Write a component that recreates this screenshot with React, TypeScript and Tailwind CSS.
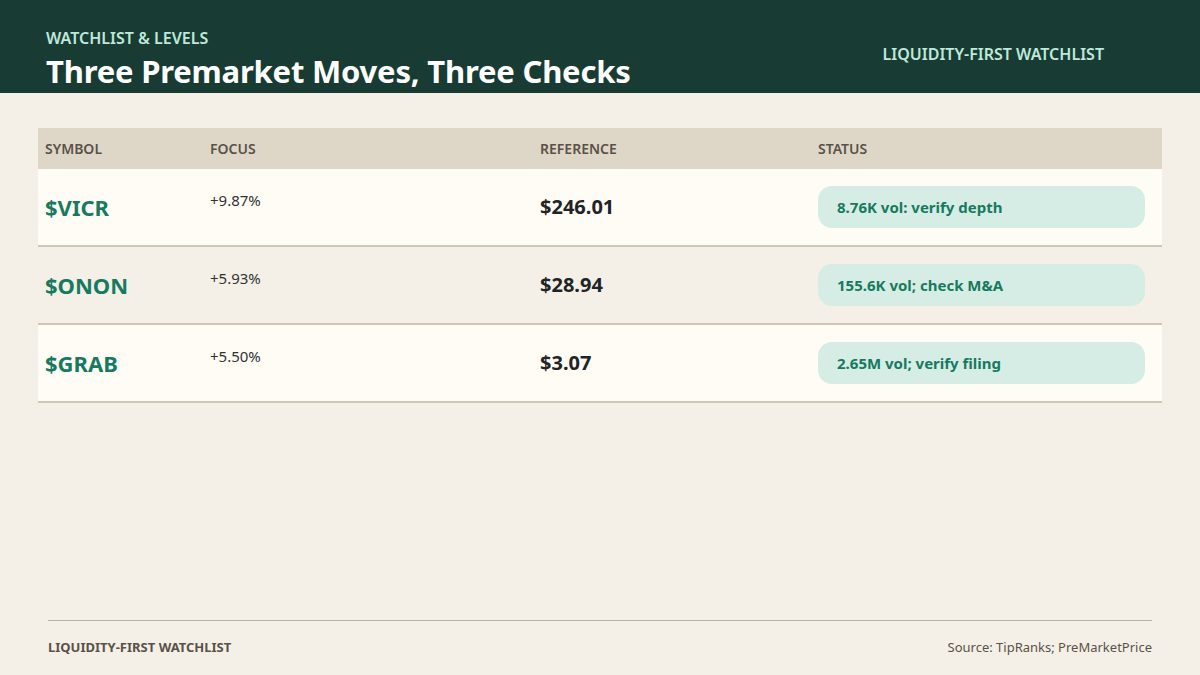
export default function App() {
  const rows = [
    { s: "$VICR", f: "+9.87%", r: "$246.01", st: "8.76K vol: verify depth", bg: "bg-[#fffcf5]" },
    { s: "$ONON", f: "+5.93%", r: "$28.94", st: "155.6K vol; check M&A", bg: "bg-[#f4f0e7]" },
    { s: "$GRAB", f: "+5.50%", r: "$3.07", st: "2.65M vol; verify filing", bg: "bg-[#fffcf5]" },
  ];
  return (
    <div className="w-[1200px] h-[675px] bg-[#f4f0e7] flex flex-col" style={{ fontFamily: '"Noto Sans", "Open Sans", sans-serif' }}>
      <div className="h-[93px] bg-[#183c34] flex items-start justify-between px-[46px] shrink-0">
        <div className="pt-[27px]">
          <div className="text-[16px] font-semibold text-[#bfe9da] leading-[22px]">WATCHLIST &amp; LEVELS</div>
          <div className="text-[31px] font-bold text-white leading-[42px] mt-[1px] tracking-[-0.2px]">Three Premarket Moves, Three Checks</div>
        </div>
        <div className="pt-[42px] pr-[50px] text-[16px] font-semibold text-[#bfe9da]">LIQUIDITY-FIRST WATCHLIST</div>
      </div>
      <div className="mx-[38px] mt-[35px]">
        <div className="h-[41px] bg-[#ded7c8] flex items-center text-[14px] font-semibold text-[#5a5148]">
          <div className="w-[172px] pl-[7px]">SYMBOL</div>
          <div className="w-[330px]">FOCUS</div>
          <div className="w-[278px]">REFERENCE</div>
          <div>STATUS</div>
        </div>
        {rows.map((r) => (
          <div key={r.s} className={`h-[78px] ${r.bg} border-b-2 border-[#cfc6b6] flex items-center`}>
            <div className="w-[172px] pl-[7px] text-[22px] font-bold text-[#177a5f]">{r.s}</div>
            <div className="w-[330px] self-start pt-[20px] text-[15px] text-[#333]">{r.f}</div>
            <div className="w-[278px] text-[20px] font-bold text-[#1f2426]">{r.r}</div>
            <div className="w-[327px] h-[42px] rounded-[14px] bg-[#d6ede5] flex items-center pl-[19px] text-[15px] font-bold text-[#177a5f]">{r.st}</div>
          </div>
        ))}
      </div>
      <div className="mt-auto mx-[48px] border-t border-[#b9b09f] h-[55px] flex items-center justify-between mb-[0px]">
        <div className="text-[13px] font-bold text-[#5a5148]">LIQUIDITY-FIRST WATCHLIST</div>
        <div className="text-[13px] text-[#5a5148]">Source: TipRanks; PreMarketPrice</div>
      </div>
    </div>
  );
}
